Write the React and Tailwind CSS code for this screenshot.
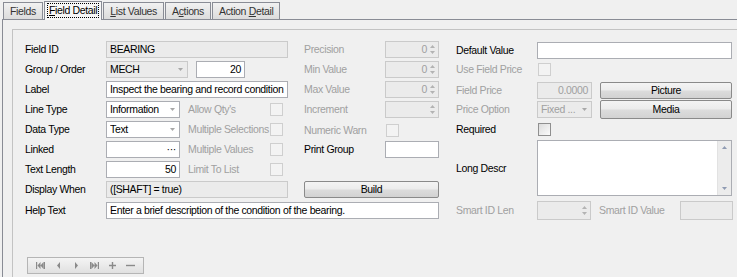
import React from "react";

const Arrow = ({ dir = "down", color = "#7a7a7a" }) => (
  <svg width="5" height="3" viewBox="0 0 5 3" className="shrink-0">
    {dir === "down" ? (
      <path d="M0 0h5L2.5 3z" fill={color} />
    ) : (
      <path d="M0 3h5L2.5 0z" fill={color} />
    )}
  </svg>
);

const Box = ({ className = "", disabled, right, muted, children }) => (
  <div
    className={`h-[17px] border flex items-center px-[3px] whitespace-nowrap overflow-hidden ${
      disabled ? "bg-[#ebebeb] border-[#cacaca]" : "bg-white border-[#abadb3]"
    } ${right ? "justify-end" : ""} ${muted ? "text-[#a0a0a0]" : "text-black"} ${className}`}
  >
    {children}
  </div>
);

const Combo = ({ className = "", disabled, muted, text }) => (
  <div
    className={`h-[17px] border flex items-center pl-[3px] pr-[4px] ${
      disabled ? "bg-[#ebebeb] border-[#cacaca]" : "bg-white border-[#abadb3]"
    } ${muted ? "text-[#a0a0a0]" : "text-black"} ${className}`}
  >
    <span className="flex-1 whitespace-nowrap overflow-hidden">{text}</span>
    <Arrow color="#a8a8a8" />
  </div>
);

const Spin = ({ className = "", value }) => (
  <div className={`h-[17px] border bg-[#ebebeb] border-[#cacaca] flex items-center text-[#a0a0a0] ${className}`}>
    <span className="flex-1 text-right pr-[3px]">{value}</span>
    <div className="flex flex-col gap-[3px] pr-[3px]">
      <Arrow dir="up" color="#b3b3b3" />
      <Arrow color="#b3b3b3" />
    </div>
  </div>
);

const Check = ({ disabled }) => (
  <div
    className={`shrink-0 w-[13px] h-[13px] border ${
      disabled ? "border-[#cfcfcf] bg-[#f3f3f3]" : "border-[#8f8f8f] bg-gradient-to-br from-[#dcdcdc] to-[#fbfbfb]"
    }`}
  />
);

const Btn = ({ className = "", children }) => (
  <div
    className={`border border-[#8a8a8a] rounded-[2px] flex items-center justify-center text-black bg-[linear-gradient(#f4f4f4_0%,#ececec_48%,#dcdcdc_52%,#d2d2d2_100%)] ${className}`}
  >
    {children}
  </div>
);

const Row = ({ children, className = "" }) => (
  <div className={`h-[20px] flex items-center ${className}`}>{children}</div>
);

const Lbl = ({ children, muted, className = "w-[81px]" }) => (
  <span className={`shrink-0 whitespace-nowrap ${muted ? "text-[#a0a0a0]" : "text-black"} ${className}`}>{children}</span>
);

const Tab = ({ children, active }) =>
  active ? (
    <div className="relative z-10 -mb-px h-[19px] px-[2px] border border-b-0 border-[#898c95] bg-[#f7f7f7] flex items-start pt-[1px] mr-[1px]">
      <span className="border border-dotted border-black px-[1px] leading-[13px] whitespace-pre">{children}</span>
    </div>
  ) : (
    <div className="h-[17px] px-[6px] border border-b-0 border-[#898c95] bg-gradient-to-b from-[#f1f1f1] to-[#dcdcdc] flex items-center mr-[1px] text-[#333]">
      <span className="whitespace-pre">{children}</span>
    </div>
  );

const NavIcon = ({ d }) => (
  <svg width="9" height="7" viewBox="0 0 9 7">
    <path d={d} fill="#8a8a8a" />
  </svg>
);

export default function App() {
  return (
    <div className="w-[737px] h-[277px] overflow-hidden bg-[#f0f0f0] text-[10.5px] tracking-[-0.35px] font-['Liberation_Sans',Arial,sans-serif] leading-none">
      {/* tab strip */}
      <div className="flex items-end h-[19px] pl-[3px]">
        <Tab>Fields</Tab>
        <Tab active>
          <u>F</u>ield Detail
        </Tab>
        <Tab>
          <u>L</u>ist Values
        </Tab>
        <Tab>
          A<u>c</u>tions
        </Tab>
        <Tab>
          Action <u>D</u>etail
        </Tab>
      </div>

      {/* tab page */}
      <div className="ml-[2px] h-[300px] border-t border-l border-[#898c95] pt-[9px] pl-[9px]">
        <div className="h-[300px] border-t border-l border-[#c3c3c3] pt-[9px] pl-[12px]">
          <div className="flex">
            {/* left column */}
            <div className="w-[263px] flex flex-col">
              <Row>
                <Lbl>Field ID</Lbl>
                <Box disabled className="w-[182px]">BEARING</Box>
              </Row>
              <Row>
                <Lbl>Group / Order</Lbl>
                <Combo disabled text="MECH" className="w-[82px]" />
                <Box right className="w-[49px] ml-[8px]">20</Box>
              </Row>
              <Row>
                <Lbl>Label</Lbl>
                <Box className="w-[182px]">Inspect the bearing and record condition</Box>
              </Row>
              <Row>
                <Lbl>Line Type</Lbl>
                <Combo text="Information" className="w-[74px]" />
                <Lbl muted className="ml-[8px] w-[82px]">Allow Qty's</Lbl>
                <Check disabled />
              </Row>
              <Row>
                <Lbl>Data Type</Lbl>
                <Combo text="Text" className="w-[74px]" />
                <Lbl muted className="ml-[8px] w-[82px]">Multiple Selections</Lbl>
                <Check disabled />
              </Row>
              <Row>
                <Lbl>Linked</Lbl>
                <Box right className="w-[74px] text-[#555]">···</Box>
                <Lbl muted className="ml-[8px] w-[82px]">Multiple Values</Lbl>
                <Check disabled />
              </Row>
              <Row>
                <Lbl>Text Length</Lbl>
                <Box right className="w-[74px]">50</Box>
                <Lbl muted className="ml-[8px] w-[82px]">Limit To List</Lbl>
                <Check disabled />
              </Row>
              <Row>
                <Lbl>Display When</Lbl>
                <Box disabled className="w-[182px]">([SHAFT] = true)</Box>
              </Row>
            </div>

            {/* middle column */}
            <div className="w-[135px] ml-[16px] flex flex-col">
              <Row>
                <Lbl muted>Precision</Lbl>
                <Spin value="0" className="w-[54px]" />
              </Row>
              <Row>
                <Lbl muted>Min Value</Lbl>
                <Spin value="0" className="w-[54px]" />
              </Row>
              <Row>
                <Lbl muted>Max Value</Lbl>
                <Spin value="0" className="w-[54px]" />
              </Row>
              <Row>
                <Lbl muted>Increment</Lbl>
                <Spin value="" className="w-[54px]" />
              </Row>
              <Row className="pt-[2px]">
                <Lbl muted className="w-[82px]">Numeric Warn</Lbl>
                <Check disabled />
              </Row>
              <Row>
                <Lbl>Print Group</Lbl>
                <Box className="w-[54px]" />
              </Row>
              <Row />
              <Row>
                <Btn className="w-[135px] h-[17px]">Build</Btn>
              </Row>
            </div>

            {/* right column */}
            <div className="w-[276px] ml-[17px] flex flex-col">
              <Row className="pt-[2px]">
                <Lbl>Default Value</Lbl>
                <Box className="w-[195px]" />
              </Row>
              <Row>
                <Lbl muted className="w-[82px]">Use Field Price</Lbl>
                <Check disabled />
              </Row>
              <Row className="pt-[2px]">
                <Lbl muted>Field Price</Lbl>
                <Box disabled muted right className="w-[55px]">0.0000</Box>
                <Btn className="w-[132px] h-[17px] ml-[8px]">Picture</Btn>
              </Row>
              <Row>
                <Lbl muted>Price Option</Lbl>
                <Combo disabled muted text="Fixed ..." className="w-[55px]" />
                <Btn className="w-[132px] h-[19px] ml-[8px]">Media</Btn>
              </Row>
              <Row className="pt-[1px]">
                <Lbl className="w-[82px]">Required</Lbl>
                <Check />
              </Row>
              <div className="h-[58px] flex items-center">
                <Lbl>Long Descr</Lbl>
                <div className="w-[195px] h-[56px] border border-[#abadb3] bg-white flex justify-end">
                  <div className="w-[14px] bg-[#ececec] border-l border-[#e2e2e2] flex flex-col items-center justify-between py-[5px]">
                    <Arrow dir="up" color="#8f9bb3" />
                    <Arrow color="#8f9bb3" />
                  </div>
                </div>
              </div>
            </div>
          </div>

          {/* bottom row */}
          <div className="flex h-[22px] items-center">
            <Lbl>Help Text</Lbl>
            <Box className="w-[333px]">Enter a brief description of the condition of the bearing.</Box>
            <Lbl muted className="ml-[17px] w-[81px]">Smart ID Len</Lbl>
            <div className="w-[54px] h-[19px] border bg-[#ebebeb] border-[#cacaca] flex items-center justify-end pr-[3px]">
              <div className="flex flex-col gap-[3px]">
                <Arrow dir="up" color="#b3b3b3" />
                <Arrow color="#b3b3b3" />
              </div>
            </div>
            <Lbl muted className="ml-[8px] w-[81px]">Smart ID Value</Lbl>
            <div className="w-[53px] h-[19px] border bg-[#ebebeb] border-[#cacaca]" />
          </div>

          {/* navigator */}
          <div className="mt-[36px] ml-[2px] w-[117px] h-[17px] border border-[#b5b5b5] bg-gradient-to-b from-[#f4f4f4] to-[#e0e0e0] flex items-center justify-around px-[3px]">
            <NavIcon d="M0 0h1.2v7H0zM1.5 3.5L4.5 0v7zM4.5 3.5L7.5 0v7zM7.8 0H9v7H7.8z" />
            <NavIcon d="M3 3.5L6 0v7z" />
            <NavIcon d="M3 0l3 3.5L3 7z" />
            <NavIcon d="M0 0h1.2v7H0zM1.5 0l3 3.5L1.5 7zM4.5 0l3 3.5L4.5 7zM7.8 0H9v7H7.8z" />
            <NavIcon d="M3.8 0h1.4v7H3.8zM1 2.8h7v1.4H1z" />
            <NavIcon d="M0 2.8h9v1.4H0z" />
          </div>
        </div>
      </div>
    </div>
  );
}
